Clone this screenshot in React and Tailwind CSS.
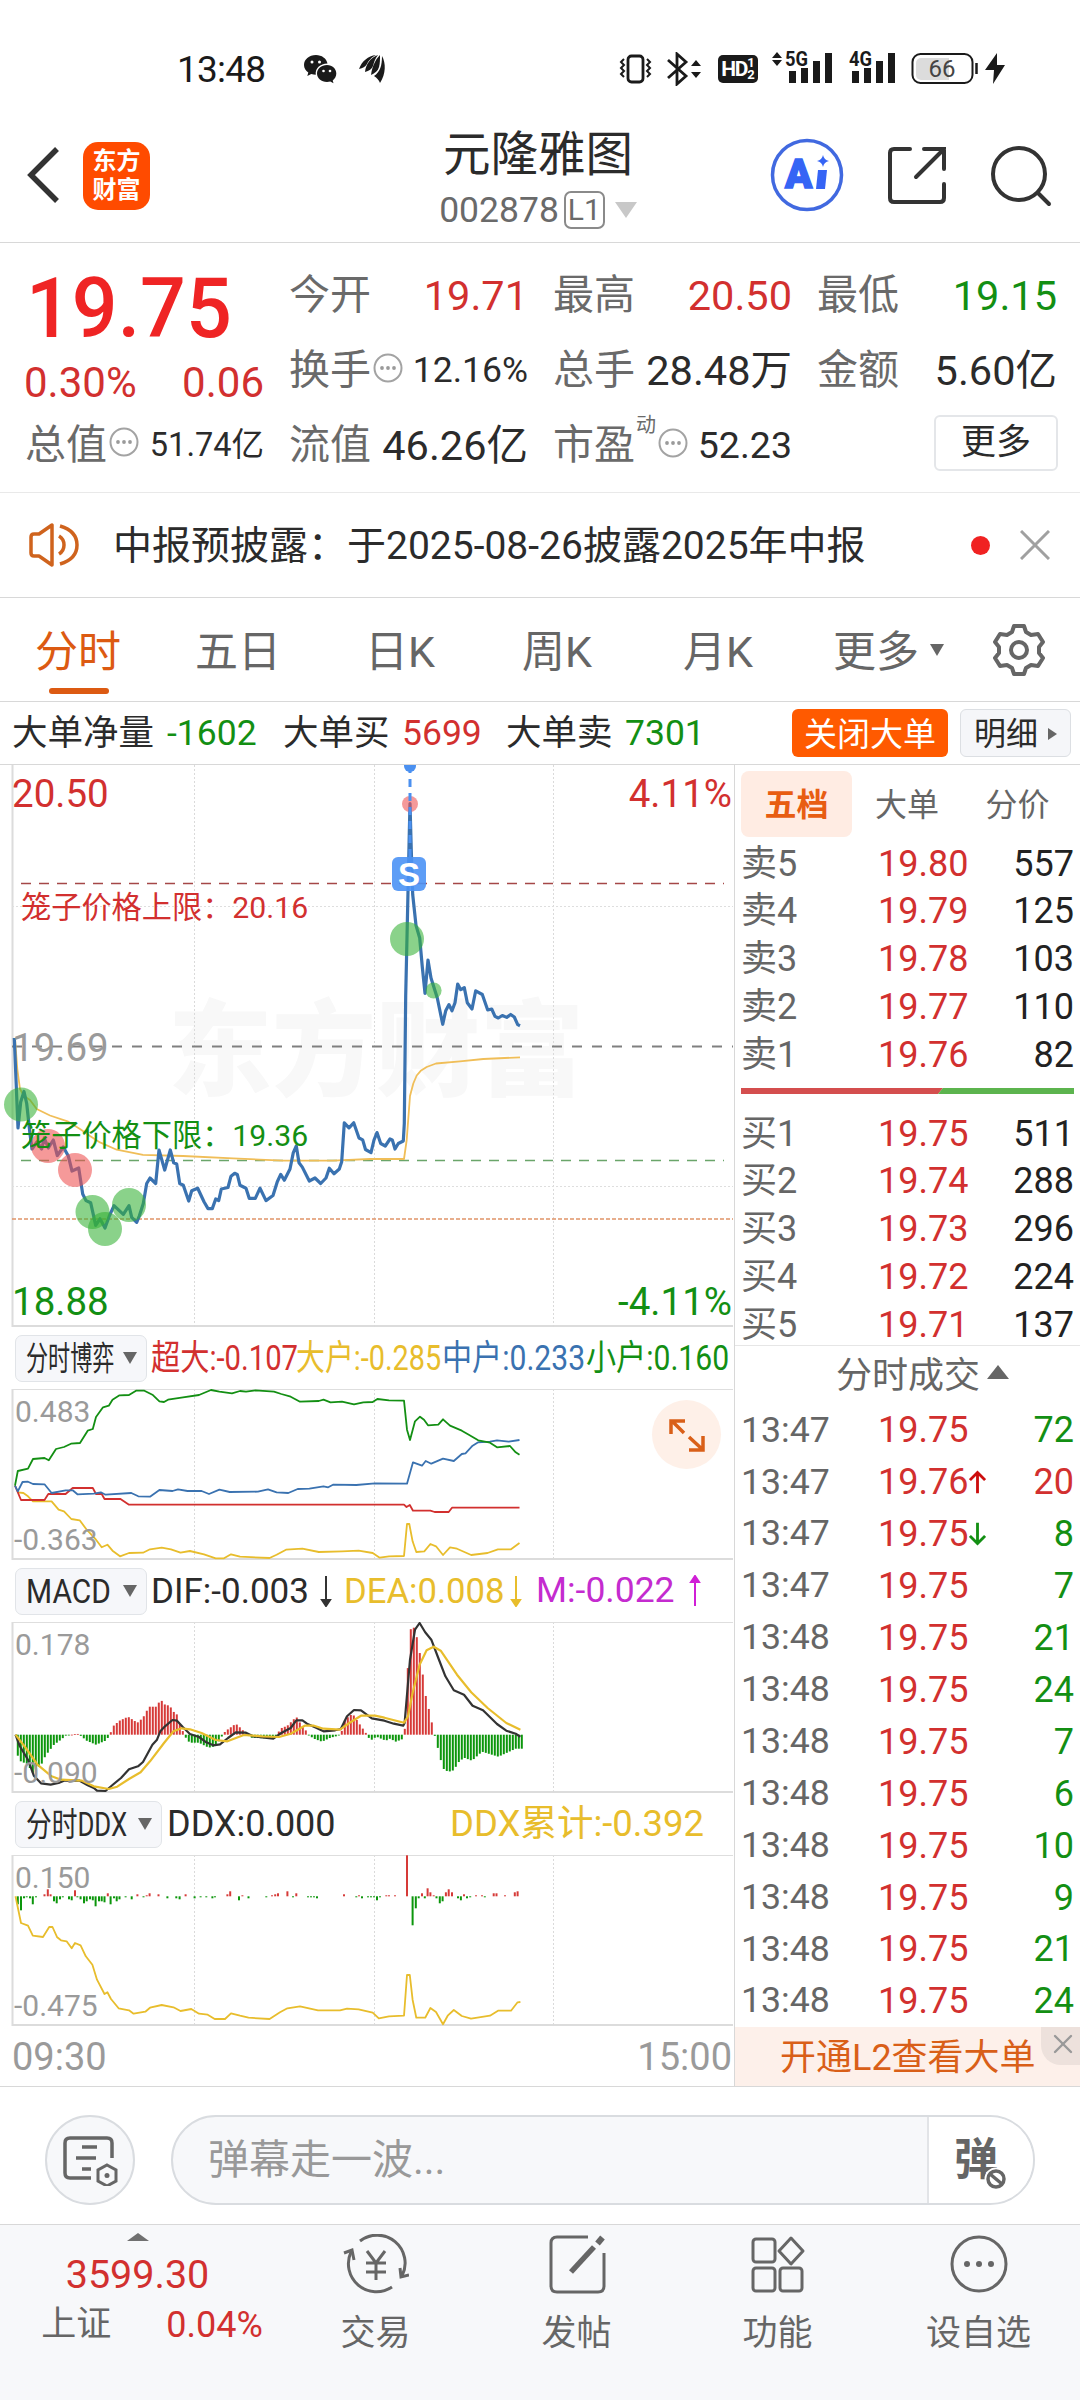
import { X } from 'lucide-react'

const RED = '#d2302f'
const GREEN = '#138f13'
const BLUE = '#3a72b0'
const GOLD = '#e8bd2c'

const sells = [
  ['卖5', '19.80', 557],
  ['卖4', '19.79', 125],
  ['卖3', '19.78', 103],
  ['卖2', '19.77', 110],
  ['卖1', '19.76', 82]
]

const buys = [
  ['买1', '19.75', 511],
  ['买2', '19.74', 288],
  ['买3', '19.73', 296],
  ['买4', '19.72', 224],
  ['买5', '19.71', 137]
]

const deals = [
  { time: '13:47', price: '19.75', vol: 72 },
  { time: '13:47', price: '19.76', vol: 20, dir: 'up' },
  { time: '13:47', price: '19.75', vol: 8, dir: 'down' },
  { time: '13:47', price: '19.75', vol: 7 },
  { time: '13:48', price: '19.75', vol: 21 },
  { time: '13:48', price: '19.75', vol: 24 },
  { time: '13:48', price: '19.75', vol: 7 },
  { time: '13:48', price: '19.75', vol: 6 },
  { time: '13:48', price: '19.75', vol: 10 },
  { time: '13:48', price: '19.75', vol: 9 },
  { time: '13:48', price: '19.75', vol: 21 },
  { time: '13:48', price: '19.75', vol: 24 }
]

// Chart series, x,y pairs inside each panel
const priceLine =
  '14.3,273 18,363 20.7,337 24,326.5 26.7,338.5 30,369 32,384 37,377 41.7,384 44.3,373 48.3,383 53.3,375 57.3,390.5 63.3,382 68.3,391 72,406 78.7,403 82.7,429 86,435.6 90.7,437.8 95.7,460.3 100,453.8 105,463 109.3,451 114,440.7 123.3,449.4 129,440.7 131.7,452.3 136.7,457.4 139.3,451 143.3,438.5 146.7,418.5 150,413 155.7,418.5 159,385 164.7,405 170.3,385 173.7,397.8 176.7,399 179.7,418.5 183.3,420.3 188.7,436 191.7,425.8 197.7,423.2 204,436.7 208,443.6 212.3,443.6 215.7,434 218.7,435.6 221.3,424 228,422.5 231,411.2 234.7,408.3 237.3,409.4 240,420.3 246,423.2 249.3,433.4 255.3,433.4 260,423.2 266,435.6 273,430.5 277.3,416.7 280.7,409.4 284.3,415.2 290,404 293.3,387.6 296.3,381 299,397.8 302.3,402.1 309.3,416 315,413 320.7,418.5 326,413 329.3,403.2 334,408.7 339.3,404 341.7,396.7 344.3,357.8 349,362.9 353.7,357.8 359,373 362.7,374.9 365.5,384.5 371,387.6 374,375 377,367.6 380.7,378.5 385.3,381 390,374 392.3,374.9 395,384 398.3,378.5 403.3,376 404.3,358.5 405.7,231 407.3,158.6 409.3,67.7 410,38.6 411.3,86 412.7,129.5 416,160.4 419.7,173 422.3,202 425,228.4 428,195 431,213 437.3,233 442.7,259.3 445.7,245.8 449,239.6 452,245.8 455,237.8 457.7,219 460.7,224.7 464.3,222.6 467.3,237.8 472,244 475.7,225.8 482.3,229.5 487.7,245 491.7,244 495,251.3 498.3,253 502.3,250.5 506.7,252.4 510.7,249.5 514.3,252 517.7,259.6 520,260.7'
const avgLine =
  '15,273 17.3,304 20,324 24,331 30,335 36.7,344 50,350.5 68.3,356.7 80,364 90,371 100,377.4 116.7,384.7 143,389.8 183,391 233,393.4 283,395.6 333,395.6 370,394 404,394 406.7,375 410,331 413.3,318.5 416.7,310.5 420.7,305.8 426.7,302 436,298.5 460,296.3 483.3,294 520,292.3'

const smallLine =
  '15,96.7 17.8,82 28,79.7 33,70 44.5,69 48.8,71.3 56,60 64,58 71,54.7 80,54 87.7,41.7 92.8,40 96,28 103,18.3 108.8,16.7 112.5,10.7 119.5,6.3 129,6 136,1.7 144.4,1.7 152.4,5.7 159.4,12.3 164,13 168,10.7 183,8.3 199,6 211,1 219.4,2.7 232,4.3 240,2 246,2.7 255.5,1.3 274,2.7 281.3,5 290.7,7.7 300,12.7 318.8,12 323.5,10.7 330.5,13.3 342,12.7 354,15.3 363.3,13.3 372.7,13 377.4,10 389,11.3 404,11.7 407,40.7 410,51 415,32.3 420,27.7 424,30.7 428,36.3 438.3,35.7 443,30.3 450,36.7 461.8,41.7 468.8,45.7 478.2,51.3 490,53.7 497,58.3 510,57 515.7,63.3 519.5,65.7'
const midLine =
  '15,96.7 17.8,102.3 22.5,93 28,92.7 33,95 44.5,95.3 51.6,104 65.6,101.3 72.7,101.3 77.4,105.3 93.8,104.7 100.8,103.3 105.5,105.7 131.3,104 138.3,107.3 150,107.7 159.4,101 172.5,102 178,100.3 187.5,102 201.6,102 209,105 219.4,100.7 229.7,103 257.9,102.7 268,100.3 276.6,103.3 288.3,104 297.7,100 309.4,99.7 323.5,97.3 328.2,98.3 333,95.7 356.3,96 375,94.3 407,94.7 410,84 413,73.3 422,76.7 425.7,72 431.3,74.7 443,69.7 453.8,72 461.8,65 465.5,64.3 472.6,56.7 478.2,53.3 490,52.7 497,51.3 508.7,52.7 519.5,51'
const superLine =
  '15,96.7 21,111 44.5,111 48.3,105 65.6,105 72.7,99 92.8,99 96,105 101.7,105 104.5,110 120.5,110 129,115.7 404,115.7 406.5,118 409.8,116 413,121.7 430.4,121.7 434.6,123 448.7,123 452,118.7 519.5,118.7'
const bigLine =
  '17.8,103.3 23.4,104 28,107.3 33,112.3 51.6,112.3 58.6,120.7 64,122.3 71.3,130 79.7,131.3 86.7,140.7 96,150.7 101.7,158.3 107.4,155.7 112.5,161.7 120,167.3 129,164 143,163.7 150,160.3 161.7,158.7 171,160.3 180.5,163.7 189.9,162 204,165.3 215.7,169.3 224,169.3 231,165.3 240,167.7 269.6,169 276.6,165.7 286,160.7 302.4,159.7 318.8,163 342,162.3 358.6,161.7 372.7,164 379.7,168.7 389,167.3 404,167 407,135 409.3,135 412.6,152.3 416.3,163 424.3,162.3 430.4,155 436,157.3 443,166 450,158.3 457,159.7 471.2,166 487.6,164 497.9,160.3 511,160.3 519.5,154'

const difLine =
  '15.5,112.7 19.7,124 28,137.7 33.8,153.7 41,161.3 50.6,162.7 58.6,161 64,158.7 79.7,158.7 87.7,163.3 93.8,166 97,168.7 105.5,169 112.5,163 121,156 129,147.3 138,144.3 143,140 152.4,122.7 157,117.7 160.3,109.3 165,104.3 172.5,98 177,98.7 182.8,105 189.9,112 199,115 206.3,120.3 213.3,123.3 220,122.3 228,116 235.8,110.3 246,110.7 253,114.3 273.3,116.7 281.3,111 290.7,106 296.3,98.3 302.4,98.3 307,101.7 315,105.3 323.5,109.3 335.2,108.3 340.8,107 347,94.3 354,88 361,88.3 371.8,96.3 384.4,98.7 393.8,101.7 403.2,103.7 404.6,101 410,37.7 415,7.7 419.6,1 425.2,10.3 431.3,17.7 438.3,36 445.4,54.3 453.8,68.3 464,72.7 472.6,83.7 483,88.3 497,102 506.3,108.7 515.7,111.7 520.4,114.7'
const deaLine =
  '15.5,112.7 25.8,126 37.5,142.7 51.6,154.3 61,157.7 82,158.7 93.8,164.3 108.8,167 117.2,164.7 129,157 140.6,150.3 150,139.3 164,121 173.5,109.3 181.4,106.3 190,107.3 201.6,111 215.7,118 227.4,119.3 243.8,113 262.5,114.3 279,115 290.7,111.7 304.7,103.7 314,103.7 323.5,106.7 340,107.7 349.3,101 361,93.7 375,93.7 384.4,95.7 404,100.7 408,94.3 412.6,71 419.6,42.7 426.6,28.3 433.7,24.7 440.7,28.7 457,52.7 471.2,70.3 487.6,86 506.3,101 520.4,107.7'

// MACD histogram: [x, height], values between two stops are interpolated
const macdStops = [
  [17.8, -21], [21, -27], [27, -29], [32.8, -38], [37.5, -33], [41.3, -30], [44.5, -23], [47.8, -18], [54, -10], [61, -5], [65.6, -1],
  [77.4, 1], [80.6, -1], [86.7, -6], [96, -10], [100.8, -8], [105.5, -6], [109.7, -1], [112.5, 8], [119.5, 14], [128, 18],
  [137.4, 12], [143, 17], [149, 28], [156, 28], [160.8, 35], [165, 30], [169.7, 29], [173.5, 23], [177.2, 20], [180.5, 8],
  [184.2, 1], [186.6, -5], [190, -8], [199, -8], [208.6, -13], [213.3, -12], [219.4, -6], [224, 2], [227.4, 5], [235.8, 11],
  [241.4, 6], [246, 1], [250.8, -3], [272, -4], [276.6, -2], [280, 6], [287.4, 9], [296.3, 18], [302.4, 8], [307, 3],
  [309.4, -1], [314, -4], [322, -7], [330.5, -3], [338.5, -1], [341.3, 2], [344.6, 14], [348.3, 18], [352.6, 21], [358.6, 12],
  [365.7, 2], [368.5, -3], [371.8, -5], [376.5, -2], [385.8, -6], [390, -4], [396, -7], [403.5, -4], [406, 15], [409, 101],
  [412.6, 110], [415.8, 102], [418.7, 89], [422, 67], [424.8, 43], [427.6, 31], [430.8, 17], [434, 2], [437, -10], [440, -22],
  [442.6, -33], [445.4, -36], [451.5, -37], [454.8, -34], [458, -28], [464, -23], [472, -26], [482, -17], [498.4, -22],
  [515.7, -14], [521.5, -14]
]

const ddxBars = [
  [17.8, -8], [21, -14], [24, -2], [26.7, -1], [30, -2], [32.8, -8], [36, -1], [44.5, 2], [47.8, 7], [50.6, 2], [54, -5],
  [56.7, -7], [60, -3], [62.8, -1], [69, -3], [71.7, -4], [75, 6], [77.4, -1], [80.6, -3], [84, -7], [86.7, -5], [90, -3],
  [92.8, -4], [95.6, -10], [99, -5], [101.7, -5], [104.5, -6], [107.8, 3], [110.6, -8], [114, -2], [116.7, -5], [119.5, -3],
  [125.6, -1], [131.7, -3], [137.4, 2], [143.5, -1], [146.7, 1], [149.6, 3], [158.5, 2], [167.4, -2], [176.3, -2], [179.6, -3],
  [185.6, 2], [194.6, -2], [200.6, -1], [206.3, -1], [212.4, -2], [215, -1], [227.4, 2], [230.2, 5], [239, -4], [242.4, 1],
  [248.5, -2], [266.3, -1], [272, 1], [275.2, 2], [278, 3], [287.4, 5], [293, -1], [296.3, 3], [308, -1], [311, -1], [314, -1],
  [317, -2], [344, 2], [356.3, -1], [359, 1], [362, -2], [368, -1], [371, -1], [374, -1], [377, -4], [380, -1], [386.3, 1],
  [389, 1], [395, 1], [407, 41], [412.6, -29], [415.8, -12], [418.7, -2], [422, 3], [424.8, -2], [427.6, 8], [430.4, 4],
  [433.7, 1], [436.5, -2], [439.8, -7], [442.6, -5], [445.9, 4], [448.7, 7], [452, 4], [458, -2], [460.9, -4], [464, 2],
  [467, -2], [470.2, -1], [476, 1], [482, 1], [484.8, -1], [493.7, 3], [496.5, 3], [505, 1], [514.8, 4], [517.6, 5]
]
const ddxLine =
  '15.5,41.3 21,68 28,70.7 32.8,80.7 43,82 49.2,72 52.5,72 57.2,82.3 61,85.3 66.6,86.3 71.7,93.3 75,88 80.6,90.3 85.8,101.3 92.4,109.7 97,124.7 104.5,139 107.4,137.3 111,144 118.6,153.3 129,155.3 133.6,158.7 145.3,156.7 150,152.7 161.7,150 173.5,152.3 180.5,156 191.3,154 199,158.7 207.7,159.7 214.7,164 225,164 231,158.3 240,160.7 248.5,162.7 269.6,164 280,157.3 287.4,153.3 300,151.3 318,155.3 340,155.3 347,153.7 358.6,154.3 372.7,157.7 378.8,163.3 389,161.3 404,160.7 407,120 409.8,120 412.6,144.7 416.3,162.7 425.2,162.7 430.4,153 436,157 443,169.3 447.7,160.7 453.8,155 461.8,161 471,163.7 490,160.7 498,155.7 511,155.7 517.6,147.3 520.4,147'

function interpolate(stops, x) {
  const i = stops.findIndex(s => s[0] >= x)
  if (i <= 0) return stops[i === 0 ? 0 : stops.length - 1][1]
  const [x0, y0] = stops[i - 1]
  const [x1, y1] = stops[i]
  return y0 + ((y1 - y0) * (x - x0)) / (x1 - x0)
}

const macdBars = Array.from({ length: 169 }, (_, i) => {
  const x = 17.8 + i * 3
  return [x, interpolate(macdStops, x)]
})

function Line({ points, color, width = 1.8 }) {
  return <polyline points={points} fill="none" stroke={color} strokeWidth={width} strokeLinejoin="round" />
}

function Bars({ data, zero }) {
  return data.map(([x, h], i) => (
    <rect
      key={i}
      x={x - 1}
      y={h > 0 ? zero - h : zero}
      width="2"
      height={Math.max(Math.abs(h), 0.8)}
      fill={h > 0 ? '#d63a38' : '#0c960c'}
    />
  ))
}

function Dots() {
  return (
    <svg viewBox="0 0 30 30" className="w-[30px] h-[30px] shrink-0" fill="none" stroke="#a3a3a3" strokeWidth="2">
      <circle cx="15" cy="15" r="13.5" />
      <g fill="#9a9a9a" stroke="none">
        <circle cx="9" cy="15" r="1.9" />
        <circle cx="15" cy="15" r="1.9" />
        <circle cx="21" cy="15" r="1.9" />
      </g>
    </svg>
  )
}

function StatusBar() {
  return (
    <div className="h-[110px] pt-[28px] pl-[177px] pr-[74px] flex items-center text-[#1a1a1a]">
      <span className="text-[37px] w-[126px] tracking-[-0.8px]">13:48</span>
      <svg viewBox="0 0 34 30" className="w-[34px] h-[30px]">
        <path d="M13 1C6 1 1 5.500 1 11c0 3 1.700 5.800 4.300 7.600L4.300 22l4-2c1.500.5 3 .7 4.500.7C12 14.500 17 9.500 24.500 9.500 23.500 4.500 18.800 1 13 1z" fill="#1a1a1a" />
        <path d="M24 11c-5.700 0-10 3.700-10 8.500S18.300 28 24 28c1.200 0 2.300-.2 3.300-.5l3.200 1.800-.8-2.900c2.200-1.600 3.600-4 3.600-6.900C33.300 14.700 29.500 11 24 11z" fill="#1a1a1a" />
        <g fill="#fff">
          <circle cx="9" cy="8" r="1.500" />
          <circle cx="16.500" cy="8" r="1.500" />
          <circle cx="20.500" cy="17" r="1.300" />
          <circle cx="27" cy="17" r="1.300" />
        </g>
      </svg>
      <svg viewBox="0 0 28 30" className="w-[28px] h-[30px] ml-[21px]" fill="#1a1a1a">
        <path d="M1 15C4 7 10 2 18 1 13 4 11 6 9 10c-2 3-4 4-8 5z" />
        <path d="M7 18C8 10 12 4 20 1c-3 4-4 7-5 11-1 3-4 5-8 6z" />
        <path d="M13 21C14 13 17 6 22 1c0 5 0 8-1 12-1 4-4 6-8 8z" />
        <path d="M24 2c4 7 4 18-2 27-1-3-3-5-6-7 6-4 8-10 8-20z" />
      </svg>
      <div className="flex-1" />
      <svg viewBox="0 0 34 32" className="w-[34px] h-[32px]" fill="none" stroke="#1a1a1a" strokeWidth="2.800">
        <rect x="10" y="3" width="15" height="26" rx="3.500" />
        <path d="M6 6l-3 3 3 3-3 3 3 3-3 3 3 3M29 6l3 3-3 3 3 3-3 3 3 3-3 3" strokeWidth="2" />
      </svg>
      <svg viewBox="0 0 38 34" className="w-[38px] h-[34px] ml-[15px]" fill="none" stroke="#1a1a1a" strokeWidth="2.800">
        <path d="M1 8l18 16-9 8V2l9 8L1 26" />
        <path d="M29 8l5 6H24zM29 26l5-6H24z" fill="#1a1a1a" stroke="none" />
      </svg>
      <div className="w-[40px] h-[28px] ml-[13px] rounded-[5px] bg-[#1a1a1a] text-white font-bold flex items-center justify-center">
        <span className="text-[21px] tracking-[-1.2px]">HD</span>
        <span className="flex flex-col text-[13px] leading-[12px]">
          <span>1</span>
          <span>2</span>
        </span>
      </div>
      <svg viewBox="0 -8 62 50" className="w-[62px] h-[50px] ml-[14px]" fill="#1a1a1a">
        <path d="M5 0l5 6H0zM5 14l5-6H0z" />
        <text x="13" y="14" fontSize="21" fontWeight="700" textLength="23" lengthAdjust="spacingAndGlyphs">5G</text>
        <path d="M17 19h7v12h-7zM29 16h7v15h-7zM41 9h7v22h-7zM53 1h7v30h-7z" />
      </svg>
      <svg viewBox="0 -8 48 50" className="w-[48px] h-[50px] ml-[15px]" fill="#1a1a1a">
        <text x="0" y="14" fontSize="21" fontWeight="700" textLength="23" lengthAdjust="spacingAndGlyphs">4G</text>
        <path d="M3 19h7v12H3zM15 16h7v15h-7zM27 9h7v22h-7zM39 1h7v30h-7z" />
      </svg>
      <svg viewBox="0 0 95 34" className="w-[95px] h-[34px] ml-[14px]">
        <path d="M10 6h28v22H10a5 5 0 0 1-5-5V11a5 5 0 0 1 5-5z" fill="#dcdcdc" />
        <rect x="1.500" y="2" width="60" height="29" rx="8" fill="none" stroke="#1a1a1a" strokeWidth="2" />
        <path d="M65.500 11v11" stroke="#1a1a1a" strokeWidth="2.500" />
        <text x="31" y="25" fontSize="24" fill="#444" textAnchor="middle">66</text>
        <path d="M86 1L74 18h9l-1 14 12-19h-8z" fill="#1a1a1a" />
      </svg>
    </div>
  )
}

function Header() {
  return (
    <div className="h-[133px] flex border-b border-[#d8d8d8] text-[#333]">
      <svg viewBox="0 0 34 56" className="w-[34px] h-[56px] ml-[26px] mt-[37px]" fill="none" stroke="#333" strokeWidth="5.500">
        <path d="M31 2L5 28l26 26" />
      </svg>
      <div className="w-[67px] h-[68px] ml-[23px] mt-[32px] rounded-[15px] bg-[#ff4b00] text-white font-bold text-[24px] leading-[29px] flex flex-col items-center justify-center">
        <span>东方</span>
        <span>财富</span>
      </div>
      <div className="w-[300px] ml-[238px] pt-[17px] flex flex-col items-center">
        <div className="text-[47.5px] leading-[56px] text-[#2b2b2b]">元隆雅图</div>
        <div className="mt-[7px] flex items-center text-[35.5px] text-[#6a6a6a]">
          <span className="leading-[40px]">002878</span>
          <span className="ml-[5px] w-[41px] h-[38px] border-2 border-[#8a8a8a] rounded-[7px] text-[30px] flex items-center justify-center">L1</span>
          <svg viewBox="0 0 22 16" className="w-[22px] h-[16px] ml-[10px]">
            <path d="M0 0h22L11 16z" fill="#c8c8c8" />
          </svg>
        </div>
      </div>
      <svg viewBox="0 0 76 76" className="w-[76px] h-[76px] ml-[81px] mt-[27px]">
        <circle cx="38" cy="38" r="34.500" fill="none" stroke="#4169e0" strokeWidth="3.500" />
        <text x="16" y="51" fontSize="40" fontWeight="900" fill="#3564f5" stroke="#3564f5" strokeWidth="1.500">A</text>
        <path d="M49 33h9l-2 19h-9z" fill="#3564f5" />
        <path d="M54 18q1 5 6 6-5 1-6 6-1-5-6-6 5-1 6-6z" fill="#3564f5" />
      </svg>
      <svg viewBox="0 0 62 62" className="w-[62px] h-[62px] ml-[41px] mt-[35px]" fill="none" stroke="#333" strokeWidth="4" strokeLinecap="round">
        <path d="M24 4H8q-4 0-4 4v45q0 4 4 4h46q4 0 4-4V39" />
        <path d="M38 4h20v20M58 4L30 32" />
      </svg>
      <svg viewBox="0 0 62 62" className="w-[62px] h-[62px] ml-[42px] mt-[35px]" fill="none" stroke="#333" strokeWidth="4" strokeLinecap="round">
        <circle cx="29" cy="29" r="26" />
        <path d="M48 48l11 11" />
      </svg>
    </div>
  )
}

function Stat({ label, value, color = 'text-[#2b2b2b]', size = 'text-[41.5px]', icon, sup }) {
  return (
    <div className="flex items-center justify-between whitespace-nowrap">
      <span className="flex items-center text-[41px] text-[#6a6a6a]">
        {label}
        {sup && <span className="text-[20px] self-start -mt-[10px] ml-[1px]">{sup}</span>}
        {icon && <span className="ml-[2px] mb-[6px]"><Dots /></span>}
      </span>
      <span className={`${size} ${color}`}>{value}</span>
    </div>
  )
}

function Quote() {
  return (
    <div className="h-[250px] pl-[25px] pr-[22px] pt-[15px] flex border-b border-[#e9e9e9]">
      <div className="w-[239px]">
        <div className="h-[101px] flex items-center text-[84px] font-medium text-[#ef2424] pl-[1px]">
          <span className="inline-block origin-left scale-x-[0.96]">19.75</span>
        </div>
        <div className="h-[47px] flex items-center justify-between text-[42px] text-[#d2302f]">
          <span className="-ml-[1px]">0.30%</span>
          <span>0.06</span>
        </div>
        <div className="h-[76px] grid pt-[2px]">
          <Stat label="总值" value="51.74亿" size="text-[32.5px]" icon />
        </div>
      </div>
      <div className="ml-[25px] grid grid-cols-[239px_239px_240px] gap-x-[25px] grid-rows-[75px_75px_75px]">
        <Stat label="今开" value="19.71" color="text-[#d2302f]" />
        <Stat label="最高" value="20.50" color="text-[#d2302f]" />
        <Stat label="最低" value="19.15" color="text-[#138f13]" />
        <Stat label="换手" value="12.16%" size="text-[35.5px]" icon />
        <Stat label="总手" value="28.48万" />
        <Stat label="金额" value="5.60亿" />
        <Stat label="流值" value="46.26亿" />
        <Stat label="市盈" value="52.23" size="text-[37.5px]" icon sup="动" />
        <div className="flex items-center justify-end">
          <span className="w-[124px] h-[56px] -mr-[1px] mb-[6px] rounded-[6px] border-2 border-[#e4e6e9] text-[35px] text-[#2b2b2b] flex items-center justify-center">更多</span>
        </div>
      </div>
    </div>
  )
}

function Notice() {
  return (
    <div className="h-[105px] flex items-center border-b border-[#d8d8d8] pl-[28px]">
      <svg viewBox="0 0 52 46" className="w-[52px] h-[46px]" fill="none" stroke="#cf631d" strokeWidth="3.500">
        <path d="M3 15q0-3 3-3h5L24 3v40L11 34H6q-3 0-3-3z" strokeLinejoin="round" />
        <path d="M31 14q5 3 5 9t-5 9M32 4q17 5 17 19T32 42" />
      </svg>
      <span className="ml-[33px] w-[858px] pt-[2px] text-[39px] text-[#2b2b2b] whitespace-nowrap">中报预披露：于2025-08-26披露2025年中报</span>
      <span className="w-[19px] h-[19px] rounded-full bg-[#f02222]" />
      <svg viewBox="0 0 30 30" className="w-[30px] h-[30px] ml-[30px]" stroke="#a0a0a0" strokeWidth="3">
        <path d="M1 1l28 28M29 1L1 29" />
      </svg>
    </div>
  )
}

function PeriodTabs() {
  return (
    <div className="h-[104px] flex items-center border-b border-[#d8d8d8] text-[43px] text-[#666] whitespace-nowrap">
      <div className="relative ml-[35px] w-[160px] pt-[5px] text-[#dc5a12]">
        分时
        <span className="absolute left-[14px] top-[62px] w-[60px] h-[6px] rounded-full bg-[#dc5a12]" />
      </div>
      <span className="w-[170px] pt-[5px]">五日</span>
      <span className="w-[157px] pt-[5px]">日K</span>
      <span className="w-[161px] pt-[5px]">周K</span>
      <span className="w-[150px] pt-[5px]">月K</span>
      <span className="pt-[5px]">更多</span>
      <svg viewBox="0 0 14 12" className="w-[14px] h-[12px] ml-[11px]">
        <path d="M0 0h14L7 12z" fill="#666" />
      </svg>
      <svg viewBox="0 0 54 54" className="w-[54px] h-[54px] ml-[48px]" fill="none" stroke="#666" strokeWidth="4" strokeLinejoin="round">
        <path d="M22 3h10l2 6 5 3 7-1 5 8-4 5v6l4 5-5 8-7-1-5 3-2 6H22l-2-6-5-3-7 1-5-8 4-5v-6l-4-5 5-8 7 1 5-3z" />
        <circle cx="27" cy="27" r="8" />
      </svg>
    </div>
  )
}

function BigOrders() {
  return (
    <div className="h-[63px] flex items-center border-b border-[#d8d8d8] text-[35.5px] text-[#2b2b2b] whitespace-nowrap">
      <span className="ml-[12px] w-[155px] pt-[2px]">大单净量</span>
      <span className="w-[116px] pt-[2px] text-[#138f13]">-1602</span>
      <span className="w-[119px] pt-[2px]">大单买</span>
      <span className="w-[104px] pt-[2px] text-[#d2302f]">5699</span>
      <span className="w-[119px] pt-[2px]">大单卖</span>
      <span className="flex-1 pt-[2px] text-[#138f13]">7301</span>
      <span className="w-[156px] h-[48px] rounded-[6px] bg-[#ff5a00] text-white text-[33px] flex items-center justify-center pt-[2px]">关闭大单</span>
      <span className="w-[111px] h-[48px] ml-[12px] mr-[9px] rounded-[6px] bg-[#f5f6f9] border border-[#dcdfe3] text-[32px] flex items-center pl-[13px] pt-[1px]">
        明细
        <svg viewBox="0 0 9 12" className="w-[9px] h-[12px] ml-[10px]">
          <path d="M0 0l9 6-9 6z" fill="#666" />
        </svg>
      </span>
    </div>
  )
}

function Grid({ height }) {
  return (
    <g fill="none" stroke="#dadada">
      <path d={`M12.500 0V${height - 1}H733`} stroke="#dcdcdc" strokeWidth="2" />
      <path d={`M194.500 0V${height}M374.500 0V${height}M553.500 0V${height}`} strokeDasharray="2 2" />
    </g>
  )
}

function PriceChart() {
  return (
    <svg viewBox="0 0 734 562" className="block w-[734px] h-[562px]">
      <text x="168" y="323" fontSize="104" fontWeight="900" fill="#f8f8f8">东方财富</text>
      <Grid height={562} />
      <g fill="none">
        <path d="M12 141.500h721M12 421.500h721" stroke="#dedede" strokeDasharray="2 2" />
        <path d="M21 118.500h703" stroke="#a54848" strokeWidth="1.500" strokeDasharray="10 8" />
        <path d="M12 281.500h721" stroke="#808080" strokeWidth="2" strokeDasharray="10 10" />
        <path d="M21 395.500h703" stroke="#6aa56a" strokeWidth="1.500" strokeDasharray="10 8" />
        <path d="M12 454h721" stroke="#e09468" strokeWidth="1.500" strokeDasharray="4 2" />
      </g>
      <Line points={avgLine} color="#f0be58" />
      <Line points={priceLine} color={BLUE} width={3.2} />
      <g fill="#35b135" fillOpacity=".58">
        <circle cx="21" cy="339.500" r="17" />
        <circle cx="92.500" cy="447" r="17" />
        <circle cx="105" cy="464" r="17" />
        <circle cx="129" cy="440" r="17" />
        <circle cx="407" cy="174" r="17" />
        <circle cx="433.600" cy="225.500" r="8" />
      </g>
      <g fill="#ee5050" fillOpacity=".58">
        <circle cx="48" cy="381" r="17" />
        <circle cx="75" cy="405" r="17" />
        <circle cx="410" cy="39" r="8" />
      </g>
      <circle cx="410" cy="1" r="6" fill="#4b90f0" />
      <path d="M410 0v92" stroke="#4b90f0" strokeWidth="3" strokeDasharray="8 6" />
      <rect x="392" y="92" width="34" height="34" rx="6" fill="#4b92f5" fillOpacity=".9" />
      <text x="409" y="121" fontSize="33" fontWeight="700" fill="#fff" textAnchor="middle" fontFamily="Liberation Sans">S</text>
      <g fontSize="38.500">
        <text x="12" y="42" fill={RED}>20.50</text>
        <text x="732" y="42" fill={RED} textAnchor="end">4.11%</text>
        <text x="12" y="296" fill="#9a9a9a">19.69</text>
        <text x="12" y="550" fill={GREEN}>18.88</text>
        <text x="732" y="550" fill={GREEN} textAnchor="end">-4.11%</text>
      </g>
      <g fontSize="30.200">
        <text x="21" y="153" fill={RED}>笼子价格上限：20.16</text>
        <text x="21" y="381" fill={GREEN}>笼子价格下限：19.36</text>
      </g>
    </svg>
  )
}

function SubChart({ top, bottom, children }) {
  return (
    <svg viewBox="0 0 734 171" className="block w-[734px] h-[171px]">
      <Grid height={171} />
      <path d="M12 .5h721" stroke="#dedede" />
      {children}
      <g fontSize="30" fill="#9a9a9a">
        <text x="15" y="33">{top}</text>
        <text x="14" y="161">{bottom}</text>
      </g>
    </svg>
  )
}

function PickerButton({ width, children }) {
  return (
    <span className={`${width} h-[47px] ml-[15px] shrink-0 rounded-[7px] border border-[#e1e4e8] bg-[#f6f7fa] text-[#2b2b2b] flex items-center justify-between pl-[10px] pr-[9px]`}>
      {children}
      <svg viewBox="0 0 14 12" className="w-[14px] h-[12px]">
        <path d="M0 0h14L7 12z" fill="#666" />
      </svg>
    </span>
  )
}

function Arrow({ up, color }) {
  return (
    <svg viewBox="0 0 12 32" className="w-[12px] h-[32px] shrink-0" stroke={color} fill={color} strokeWidth="2">
      {up ? <path d="M6 31V5M2 7l4-6 4 6z" /> : <path d="M6 1v26M2 25l4 6 4-6z" />}
    </svg>
  )
}

function Indicators() {
  return (
    <>
      <div className="h-[62px] flex items-center text-[35px] whitespace-nowrap">
        <PickerButton width="w-[132px]">
          <span className="w-[89px] text-[33px]"><span className="inline-block origin-left scale-x-[0.67]">分时博弈</span></span>
        </PickerButton>
        <div className="ml-[4px] flex">
          <span className="w-[145px] text-[#d2302f]"><span className="inline-block origin-left scale-x-[0.835]">超大:-0.107</span></span>
          <span className="w-[146px] text-[#e8bd2c]"><span className="inline-block origin-left scale-x-[0.825]">大户:-0.285</span></span>
          <span className="w-[144px] text-[#3a72b0]"><span className="inline-block origin-left scale-x-[0.86]">中户:0.233</span></span>
          <span className="w-[144px] text-[#138f13]"><span className="inline-block origin-left scale-x-[0.86]">小户:0.160</span></span>
        </div>
      </div>
      <div className="relative">
        <SubChart top="0.483" bottom="-0.363">
          <Line points={bigLine} color={GOLD} />
          <Line points={superLine} color={RED} />
          <Line points={midLine} color={BLUE} />
          <Line points={smallLine} color={GREEN} />
        </SubChart>
        <div className="absolute left-[652px] top-[11px] w-[69px] h-[69px] rounded-full bg-[#fef0e8] flex items-center justify-center">
          <svg viewBox="0 0 36 36" className="w-[36px] h-[36px]" fill="none" stroke="#d95f18" strokeWidth="3.500">
            <path d="M2 17V4h14M3 4l12 12M34 19v14H20M33 32L20 20" />
          </svg>
        </div>
      </div>
      <div className="h-[62px] flex items-center text-[35px] whitespace-nowrap">
        <PickerButton width="w-[132px]">
          <span className="w-[88px] text-[34px]"><span className="inline-block origin-left scale-x-[0.88]">MACD</span></span>
        </PickerButton>
        <span className="ml-[4px] text-[#2b2b2b] w-[169px]">DIF:-0.003</span>
        <Arrow color="#333" />
        <span className="ml-[12px] text-[#e8bd2c] w-[166px]"><span className="inline-block origin-left scale-x-[0.99]">DEA:0.008</span></span>
        <Arrow color={GOLD} />
        <span className="ml-[14px] text-[#c42bcf] text-[35.5px] w-[153px]">M:-0.022</span>
        <Arrow up color="#d01fd6" />
      </div>
      <SubChart top="0.178" bottom="-0.090">
        <Bars data={macdBars} zero={112.7} />
        <Line points={difLine} color="#333" width={2.2} />
        <Line points={deaLine} color={GOLD} width={2.2} />
      </SubChart>
      <div className="h-[62px] flex items-center text-[36px] whitespace-nowrap">
        <PickerButton width="w-[147px]">
          <span className="w-[102px] text-[33px]"><span className="inline-block origin-left scale-x-[0.78]">分时DDX</span></span>
        </PickerButton>
        <span className="ml-[5px] text-[#2b2b2b] w-[283px]">DDX:0.000</span>
        <span className="text-[#e8bd2c] text-[36.5px]">DDX累计:-0.392</span>
      </div>
      <SubChart top="0.150" bottom="-0.475">
        <Bars data={ddxBars} zero={41.3} />
        <Line points={ddxLine} color={GOLD} />
      </SubChart>
    </>
  )
}

function PriceRow({ row }) {
  const [label, price, vol] = row
  return (
    <div className="h-[48px] flex items-center pl-[6px] pr-[6px]">
      <span className="w-[137px] text-[#666]">{label}</span>
      <span className="flex-1 text-[#d2302f]">{price}</span>
      <span className="text-[#222]">{vol}</span>
    </div>
  )
}

function OrderBook() {
  return (
    <div className="w-[346px] border-l border-[#d8d8d8] flex flex-col text-[36px]">
      <div className="h-[75px] pt-[6px] pl-[6px] flex text-[32px] text-[#666]">
        <span className="w-[111px] h-[66px] pt-[2px] rounded-[8px] bg-[#ffece3] text-[#e85d12] font-bold flex items-center justify-center">五档</span>
        <span className="w-[110px] h-[66px] pt-[2px] flex items-center justify-center">大单</span>
        <span className="w-[111px] h-[66px] pt-[2px] flex items-center justify-center">分价</span>
      </div>
      {sells.map(row => <PriceRow key={row[0]} row={row} />)}
      <div className="h-[31px] pl-[6px] pr-[6px] pt-[9px]">
        <svg viewBox="0 0 333 6" className="block w-[333px] h-[6px]">
          <path d="M0 0h202l-5 6H0z" fill="#d44e4e" />
          <path d="M202 0h131v6H197z" fill="#5cb44e" />
        </svg>
      </div>
      {buys.map(row => <PriceRow key={row[0]} row={row} />)}
      <div className="h-[59px] mt-[-4px] border-t border-[#e6e6e6] flex items-center pl-[101px] pt-[2px] text-[36px] text-[#666]">
        分时成交
        <svg viewBox="0 0 22 14" className="w-[22px] h-[14px] ml-[7px] mb-[8px]">
          <path d="M0 14L11 0l11 14z" fill="#666" />
        </svg>
      </div>
      <div className="flex-1 flex flex-col pt-[1px]">
        {deals.map((deal, i) => (
          <div key={i} className="h-[51.9px] flex items-center pl-[6px] pr-[6px]">
            <span className="w-[137px] text-[#666] text-[35.7px]">{deal.time}</span>
            <span className="flex-1 flex items-center text-[#d2302f]">
              {deal.price}
              {deal.dir && (
                <svg viewBox="0 0 18 24" className={`w-[17px] h-[24px] ml-[1px] ${deal.dir === 'down' ? 'rotate-180' : ''}`} fill="none" stroke={deal.dir === 'up' ? '#cc0d0d' : '#138f13'} strokeWidth="3">
                  <path d="M9 24V3M1 10l8-8 8 8" />
                </svg>
              )}
            </span>
            <span className={deal.dir === 'up' ? 'text-[#d2302f]' : 'text-[#138f13]'}>{deal.vol}</span>
          </div>
        ))}
      </div>
      <div className="relative h-[59px] bg-[#fdf0ea] text-[#d95f18] text-[36px] flex items-center pl-[45px] pt-[3px] whitespace-nowrap">
        开通L2查看大单
        <span className="absolute right-0 top-0 w-[39px] h-[38px] bg-[#ede1dc] rounded-bl-[20px] flex items-center justify-center">
          <X className="w-[32px] h-[32px] ml-[5px] mb-[4px] text-[#999]" strokeWidth={1.8} />
        </span>
      </div>
    </div>
  )
}

function CommentBar() {
  return (
    <div className="h-[139px] flex items-center pl-[45px] border-y border-[#d8d8d8]">
      <span className="w-[90px] h-[90px] mt-[8px] rounded-full border-2 border-[#d9dce0] bg-[#f7f8fa] flex items-center justify-center">
        <svg viewBox="0 0 56 52" className="w-[56px] h-[52px]" fill="none" stroke="#666" strokeWidth="3.500">
          <path d="M29 44H8q-5 0-5-5V9q0-5 5-5h37q5 0 5 5v15" />
          <path d="M20 13h15M14 24h20M20 35h9" />
          <path d="M45 31l9 5v11l-9 5-9-5V36z" strokeWidth="3" />
          <circle cx="45" cy="41.500" r="2.500" fill="#666" stroke="none" />
        </svg>
      </span>
      <div className="w-[864px] h-[90px] ml-[36px] mt-[8px] rounded-full border-2 border-[#d9dce0] bg-[#f7f8fa] flex items-center overflow-hidden">
        <span className="flex-1 pl-[35px] pt-[2px] text-[41px] text-[#999]">弹幕走一波...</span>
        <span className="w-[106px] h-full bg-white border-l-2 border-[#e2e4e7] flex items-center">
          <span className="relative ml-[25px] text-[44px] font-bold text-[#666]">
            弹
            <svg viewBox="0 0 24 24" className="absolute left-[30px] top-[29px] w-[24px] h-[24px]">
              <circle cx="12" cy="12" r="11.500" fill="#fff" />
              <circle cx="12" cy="12" r="8" fill="none" stroke="#666" strokeWidth="3.500" />
              <path d="M6 7l12 10" stroke="#666" strokeWidth="3.500" />
            </svg>
          </span>
        </span>
      </div>
    </div>
  )
}

function NavItem({ label, children }) {
  return (
    <div className="w-[201px] flex flex-col items-center text-[35px] text-[#666]">
      <svg viewBox="0 0 66 60" className="w-[66px] h-[60px] mt-[9px] mb-[15px]" fill="none" stroke="#666" strokeWidth="3">
        {children}
      </svg>
      <span className="leading-[50px]">{label}</span>
    </div>
  )
}

function BottomNav() {
  return (
    <div className="flex-1 bg-[#f7f8fa] flex">
      <div className="w-[275px] flex flex-col items-center text-[#d2302f]">
        <svg viewBox="0 0 22 8" className="w-[22px] h-[8px] mt-[8px]">
          <path d="M0 8L11 0l11 8z" fill="#707070" />
        </svg>
        <span className="mt-[14px] text-[39.5px] leading-[40px]">3599.30</span>
        <div className="mt-[10px] flex items-center text-[36px] leading-[40px] pl-[29px]">
          <span className="w-[125px] text-[35px] text-[#666]">上证</span>
          <span>0.04%</span>
        </div>
      </div>
      <NavItem label="交易">
        <path d="M17 7A28 28 0 0 1 59 42M49 53A28 28 0 0 1 8 18" />
        <path d="M1 19l8-3 2 10M66 41l-8 2-1-9" />
        <path d="M24 17l9 12 9-12M33 29v17M23 29h20M23 38h20" />
      </NavItem>
      <NavItem label="发帖">
        <path d="M44 3H13q-6 0-6 6v43q0 6 6 6h41q6 0 6-6V19" />
        <path d="M50 13L27 38" strokeWidth="5.500" />
        <path d="M53.500 9.500l5-6" strokeWidth="6" />
      </NavItem>
      <NavItem label="功能">
        <rect x="8" y="5" width="22" height="23" rx="3" />
        <rect x="8" y="34" width="22" height="23" rx="3" />
        <rect x="35" y="34" width="22" height="23" rx="3" />
        <path d="M46 4l12 13-12 13-12-13z" strokeLinejoin="round" />
      </NavItem>
      <NavItem label="设自选">
        <circle cx="33" cy="30" r="27" />
        <g fill="#666" stroke="none">
          <circle cx="21" cy="30" r="3" />
          <circle cx="33" cy="30" r="3" />
          <circle cx="45" cy="30" r="3" />
        </g>
      </NavItem>
    </div>
  )
}

export default function App() {
  return (
    <div className="w-[1080px] h-[2400px] overflow-hidden bg-white flex flex-col leading-none font-[Roboto,'Noto_Sans_CJK_SC',sans-serif]">
      <StatusBar />
      <Header />
      <Quote />
      <Notice />
      <PeriodTabs />
      <BigOrders />
      <div className="h-[1321px] flex">
        <div className="w-[734px]">
          <PriceChart />
          <Indicators />
          <div className="h-[60px] pl-[12px] pr-[2px] pt-[2px] flex items-center justify-between text-[38px] text-[#9a9a9a]">
            <span>09:30</span>
            <span>15:00</span>
          </div>
        </div>
        <OrderBook />
      </div>
      <CommentBar />
      <BottomNav />
    </div>
  )
}
